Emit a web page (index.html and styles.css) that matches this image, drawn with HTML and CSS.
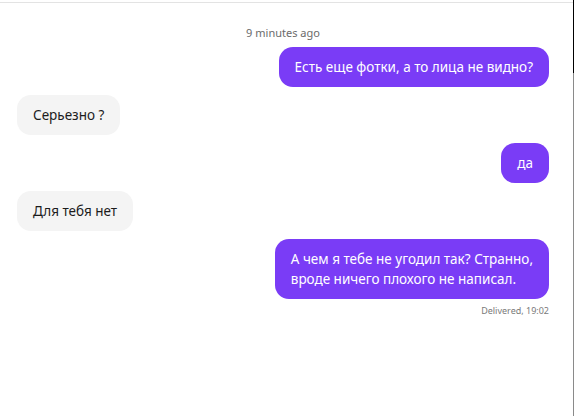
FILE: index.html
```html
<!DOCTYPE html>
<html lang="ru">
<head>
<meta charset="utf-8">
<link rel="stylesheet" href="styles.css">
</head>
<body>
<div class="frame">
  <div class="chat">
    <div class="stamp">9 minutes ago</div>
    <div class="msg out"><div class="bubble">Есть еще фотки, а то лица не видно?</div></div>
    <div class="msg in"><div class="bubble">Серьезно ?</div></div>
    <div class="msg out"><div class="bubble">да</div></div>
    <div class="msg in"><div class="bubble">Для тебя нет</div></div>
    <div class="msg out"><div class="bubble">А чем я тебе не угодил так? Странно,<br>вроде ничего плохого не написал.</div></div>
    <div class="status">Delivered, 19:02</div>
  </div>
  <div class="scroll"></div>
</div>
</body>
</html>
```
FILE: styles.css
```css
html, body {
  margin: 0;
  padding: 0;
  background: #fff;
}
body {
  font-family: "Noto Sans", "Open Sans", sans-serif;
  width: 574px;
  height: 416px;
  overflow: hidden;
}
.frame {
  display: flex;
  height: 416px;
}
.chat {
  flex: 1;
  margin-top: 2px;
  border-top: 1px solid #e3e3e3;
  padding: 0 24px 0 17px;
  display: flex;
  flex-direction: column;
  gap: 8px;
}
.scroll {
  width: 1px;
  background: linear-gradient(#000 0, #000 73px, #8a8a8a 73px, #8a8a8a 100%);
}
.stamp {
  text-align: center;
  font-size: 11px;
  color: #6b6b6b;
  margin-top: 22px;
  line-height: 16px;
  margin-bottom: -2px;
}
.msg {
  display: flex;
}
.msg.out { justify-content: flex-end; }
.msg.in { justify-content: flex-start; }
.bubble {
  font-size: 13.5px;
  line-height: 20px;
  padding: 10px 16px;
  border-radius: 14px;
}
.out .bubble {
  background: #7a3cf6;
  color: #fff;
}
.in .bubble {
  background: #f4f4f4;
  color: #1c1c1c;
}
.status {
  text-align: right;
  font-size: 9px;
  color: #7a7a7a;
  margin-top: -2px;
  line-height: 12px;
}
```
